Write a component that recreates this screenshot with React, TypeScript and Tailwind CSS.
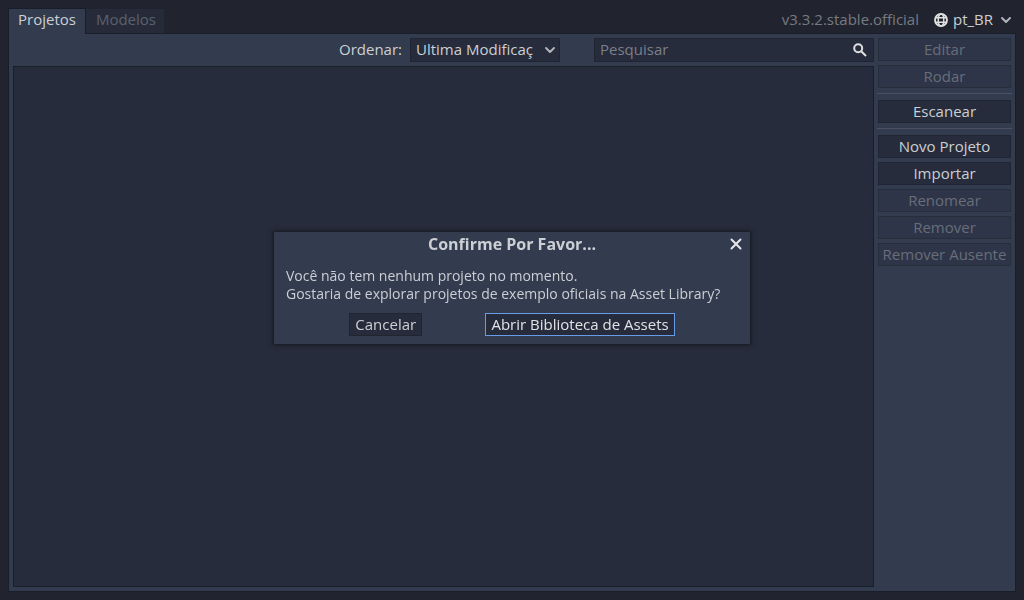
import type { ReactNode } from "react";

const CONTROL = "border border-[#202531] bg-[#262c3b] text-[#cccfd4]";
const DISABLED = "disabled:border-[#262d3b] disabled:bg-[#2e3548] disabled:text-[#686d79]";

function ChevronDown({ className = "" }: { className?: string }) {
  return (
    <svg viewBox="0 0 12 8" className={"pointer-events-none h-2 w-3 " + className} fill="none" stroke="currentColor" strokeWidth="2" strokeLinecap="round" strokeLinejoin="round" aria-hidden="true">
      <path d="M2 2l4 4 4-4" />
    </svg>
  );
}

function SideButton({ children, disabled = false }: { children: ReactNode; disabled?: boolean }) {
  return (
    <button type="button" disabled={disabled} className={`h-[23px] shrink-0 whitespace-nowrap pb-[2px] text-center leading-5 ${CONTROL} ${DISABLED}`}>
      {children}
    </button>
  );
}

function Separator() {
  return (
    <div role="separator" className="-mx-px h-1 shrink-0 pt-px">
      <div className="h-px bg-[#4a5164]" />
    </div>
  );
}

function TopBar() {
  return (
    <header className="relative z-10 -mb-px flex h-[26px] items-stretch justify-between">
      <div role="tablist" className="flex items-start">
        <button type="button" role="tab" aria-selected="true" className="h-[26px] border border-b-0 border-[#191e29] bg-[#333b4f] px-[9px] pb-[5px] leading-5 text-[#cccfd4]">
          Projetos
        </button>
        <button type="button" role="tab" aria-selected="false" className="mt-px h-6 bg-[#262b3a] pr-2 pb-1 pl-[10px] leading-5 text-[#5c606c]">
          Modelos
        </button>
      </div>
      <div className="flex h-6 items-center">
        <span className="mr-[15px] pb-[2px] text-[#777a82]">v3.3.2.stable.official</span>
        <label className="relative flex items-center text-[#cccfd4]">
          <svg viewBox="0 0 14 14" className="pointer-events-none absolute left-0 h-[14px] w-[14px]" fill="none" stroke="#e0e0e0" strokeWidth="1.9" aria-hidden="true">
            <circle cx="7" cy="7" r="6" />
            <ellipse cx="7" cy="7" rx="2.8" ry="6" strokeWidth="1.5" />
            <path d="M1.5 4.7h11M1.5 9.3h11" strokeWidth="1.5" />
          </svg>
          <select aria-label="Idioma" className="h-6 w-[82px] appearance-none bg-transparent pb-[2px] pl-[19px] leading-5 outline-none">
            <option>pt_BR</option>
          </select>
          <ChevronDown className="absolute right-1 text-[#b0b3ba]" />
        </label>
      </div>
    </header>
  );
}

function ProjectList() {
  return (
    <main className="flex min-w-0 flex-1 flex-col gap-1">
      <div className="flex h-6 items-stretch justify-end">
        <label htmlFor="sort" className="mr-2 leading-[22px] text-[#cccfd4]">Ordenar:</label>
        <div className="relative mr-[34px] flex items-center">
          <select id="sort" className={`h-6 w-[150px] appearance-none pb-[2px] pl-[5px] pr-6 leading-5 outline-none ${CONTROL}`}>
            <option>Ultima Modificaç</option>
          </select>
          <ChevronDown className="absolute right-1 text-[#b0b3ba]" />
        </div>
        <div className="relative flex w-[280px] items-center">
          <input type="text" aria-label="Pesquisar" placeholder="Pesquisar" className={`h-6 w-full pb-[2px] pl-[5px] pr-6 leading-5 outline-none placeholder:text-[#7b7f89] ${CONTROL}`} />
          <svg viewBox="0 0 14 14" className="pointer-events-none absolute right-[7px] h-[14px] w-[14px]" fill="none" stroke="#e0e0e0" strokeWidth="2" aria-hidden="true">
            <circle cx="5.2" cy="5.2" r="4" />
            <path d="M8.2 8.2l4.8 4.8" />
          </svg>
        </div>
      </div>
      <div className="flex-1 border border-[#191e29] bg-[#262c3b]" />
    </main>
  );
}

function ConfirmDialog() {
  return (
    <div className="fixed inset-0 z-20 flex items-center justify-center pb-6">
      <section role="dialog" aria-modal="true" aria-labelledby="dialog-title" className="min-w-[476px] bg-[#333b4f] px-3 pb-2 shadow-[0_0_4px_1px_rgba(0,0,0,0.5)]">
        <div className="relative flex h-6 items-center justify-center">
          <h1 id="dialog-title" className="text-[16px] leading-6 font-bold text-[#cccfd4]">Confirme Por Favor...</h1>
          <button type="button" aria-label="Fechar" className="absolute -right-1.5 flex h-4 w-4 items-center justify-center">
            <svg viewBox="0 0 12 12" className="h-3 w-3" stroke="#e8e8ea" strokeWidth="2" strokeLinecap="round" aria-hidden="true">
              <path d="M1.5 1.5l9 9M10.5 1.5l-9 9" />
            </svg>
          </button>
        </div>
        <p className="mt-[11px] text-[14px] leading-[18px] whitespace-nowrap text-[#cccfd4]">
          Você não tem nenhum projeto no momento.
          <br />
          Gostaria de explorar projetos de exemplo oficiais na Asset Library?
        </p>
        <div className="mt-[10px] flex justify-evenly">
          <button type="button" className={`h-[23px] px-[5px] pb-[2px] leading-5 ${CONTROL}`}>Cancelar</button>
          <button type="button" className="h-[23px] border border-[#699ce8] bg-[#262c3b] px-[5px] pb-[2px] leading-5 text-[#e0e2e6]">
            Abrir Biblioteca de Assets
          </button>
        </div>
      </section>
    </div>
  );
}

export default function App() {
  return (
    <div className="flex min-h-screen flex-col bg-[#21242f] p-2 font-['Open_Sans','Noto_Sans',sans-serif] text-[15px] leading-5">
      <TopBar />
      <div className="flex flex-1 gap-1 border border-[#191e29] bg-[#333b4f] p-1">
        <ProjectList />
        <aside className="flex w-[133px] shrink-0 flex-col gap-1">
          <SideButton disabled>Editar</SideButton>
          <SideButton disabled>Rodar</SideButton>
          <Separator />
          <SideButton>Escanear</SideButton>
          <Separator />
          <SideButton>Novo Projeto</SideButton>
          <SideButton>Importar</SideButton>
          <SideButton disabled>Renomear</SideButton>
          <SideButton disabled>Remover</SideButton>
          <SideButton disabled>Remover Ausente</SideButton>
        </aside>
      </div>
      <ConfirmDialog />
    </div>
  );
}
